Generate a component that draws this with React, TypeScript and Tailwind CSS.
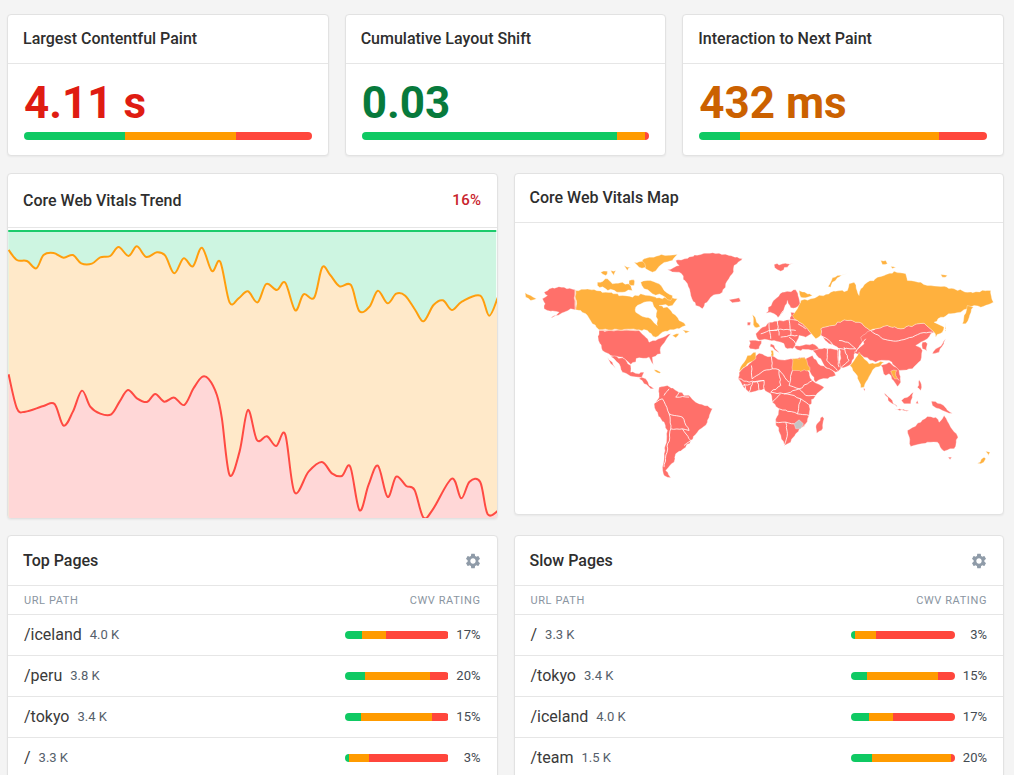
import { MdSettings } from "react-icons/md";

type Split = [number, number, number];

const metrics: { title: string; value: string; color: string; split: Split }[] = [
  { title: "Largest Contentful Paint", value: "4.11 s", color: "text-[#df1c12]", split: [35, 38.6, 26.4] },
  { title: "Cumulative Layout Shift", value: "0.03", color: "text-[#077a3c]", split: [88.6, 10, 1.4] },
  { title: "Interaction to Next Paint", value: "432 ms", color: "text-[#cb6100]", split: [14.2, 69.1, 16.7] },
];

const topPages: { path: string; count: string; pct: string; split: Split }[] = [
  { path: "/iceland", count: "4.0 K", pct: "17%", split: [17, 23, 60] },
  { path: "/peru", count: "3.8 K", pct: "20%", split: [20, 62, 18] },
  { path: "/tokyo", count: "3.4 K", pct: "15%", split: [15.5, 68.5, 16] },
  { path: "/", count: "3.3 K", pct: "3%", split: [4, 20, 76] },
];

const slowPages: { path: string; count: string; pct: string; split: Split }[] = [
  { path: "/", count: "3.3 K", pct: "3%", split: [4, 20, 76] },
  { path: "/tokyo", count: "3.4 K", pct: "15%", split: [15.5, 68.5, 16] },
  { path: "/iceland", count: "4.0 K", pct: "17%", split: [17, 23, 60] },
  { path: "/team", count: "1.5 K", pct: "20%", split: [20, 76, 4] },
];

// traced from the chart, 3x units
const goodLine = [
  [25, 75], [50, 105], [80, 108], [108, 130], [130, 90], [160, 84], [190, 98], [218, 90], [243, 115], [275, 116],
  [300, 97], [330, 93], [355, 66], [385, 93], [410, 64], [438, 96], [470, 82], [495, 92], [522, 145], [550, 100],
  [578, 124], [605, 68], [635, 138], [660, 110], [688, 232], [715, 220], [743, 199], [772, 232], [798, 177], [830, 195],
  [855, 173], [885, 256], [910, 208], [942, 218], [966, 127], [990, 150], [1018, 184], [1052, 180], [1077, 258], [1108, 245],
  [1133, 197], [1162, 235], [1188, 206], [1215, 212], [1245, 255], [1270, 289], [1300, 240], [1328, 226], [1355, 255], [1385, 230],
  [1440, 212], [1467, 272], [1493, 217],
];

const poorLine = [
  [25, 448], [50, 550], [75, 560], [130, 543], [163, 537], [190, 602], [218, 560], [245, 497], [270, 545], [300, 566],
  [333, 568], [358, 530], [383, 495], [410, 520], [440, 531], [465, 507], [492, 530], [522, 518], [552, 540], [580, 490],
  [605, 456], [625, 462], [650, 510], [665, 580], [688, 750], [718, 680], [743, 555], [770, 645], [800, 634], [828, 663],
  [855, 628], [883, 802], [925, 740], [965, 711], [995, 745], [1025, 753], [1050, 725], [1078, 856], [1105, 780], [1133, 722],
  [1162, 816], [1188, 755], [1218, 783], [1243, 795], [1270, 878], [1300, 850], [1355, 761], [1383, 820], [1408, 770], [1440, 771],
  [1462, 867], [1493, 858],
];

function smooth(pts: number[][]) {
  let d = `M${pts[0][0]} ${pts[0][1]}`;
  for (let i = 0; i < pts.length - 1; i++) {
    const a = pts[Math.max(i - 1, 0)];
    const b = pts[i];
    const c = pts[i + 1];
    const e = pts[Math.min(i + 2, pts.length - 1)];
    const c1 = [b[0] + (c[0] - a[0]) / 6, b[1] + (c[1] - a[1]) / 6];
    const c2 = [c[0] - (e[0] - b[0]) / 6, c[1] - (e[1] - b[1]) / 6];
    d += `C${c1[0]} ${c1[1]} ${c2[0]} ${c2[1]} ${c[0]} ${c[1]}`;
  }
  return d;
}

// breaks long straight edges so coasts and borders look hand-drawn, same result every run
function rough(points: string, closed: boolean, amp: number) {
  const pts = points.split(" ").map((p) => p.split(",").map(Number));
  const out: string[] = [];
  const count = closed ? pts.length : pts.length - 1;
  for (let i = 0; i < count; i++) {
    const a = pts[i];
    const b = pts[(i + 1) % pts.length];
    const steps = Math.max(1, Math.round(Math.hypot(b[0] - a[0], b[1] - a[1]) / 9));
    for (let s = 0; s < steps; s++) {
      const t = s / steps;
      const x = a[0] + (b[0] - a[0]) * t;
      const y = a[1] + (b[1] - a[1]) * t;
      const n = Math.sin(x * 12.9898 + y * 78.233) * 43758.5453;
      const m = Math.sin(x * 39.346 + y * 11.135) * 24634.6345;
      const jx = s === 0 ? 0 : ((n - Math.floor(n)) - 0.5) * amp;
      const jy = s === 0 ? 0 : ((m - Math.floor(m)) - 0.5) * amp;
      out.push(`${(x + jx).toFixed(1)},${(y + jy).toFixed(1)}`);
    }
  }
  if (!closed) out.push(pts[pts.length - 1].join(","));
  return out.join(" ");
}

const RED = "#ff706a";
const ORANGE = "#ffb13e";

const westRed = [
  "178,148 178,208 165,205 145,215 120,225 105,232 130,215 105,212 85,205 88,190 80,175 95,165 85,155 110,142 145,140",
  "250,270 370,270 385,285 400,305 420,300 465,280 450,300 435,320 435,340 410,350 415,378 400,350 370,352 345,372 320,350 285,345 260,330 248,300",
  "285,348 320,352 345,375 345,395 370,400 385,395 378,412 350,408 320,395 310,370 295,355",
  "275,350 290,365 300,385 285,370",
  "378,410 390,415 400,435 415,445 405,445 385,430 370,415",
  "430,440 455,435 490,455 525,470 540,485 590,505 575,545 545,575 525,600 510,620 480,640 475,665 450,690 465,712 445,705 440,680 445,640 455,570 420,510 415,490 430,470",
  "480,60 555,42 610,38 640,45 680,55 655,75 650,100 630,130 620,155 585,170 560,205 540,195 525,165 515,130 490,95 455,88 490,75",
  "640,178 670,172 675,182 650,187",
  "695,245 705,245 703,254 695,254",
];

const westOrange = [
  "28,157 45,165 62,175 45,180 30,170",
  "180,150 235,147 270,155 320,165 350,170 375,160 400,165 440,175 465,170 485,175 470,195 430,195 460,205 490,240 510,255 490,265 440,275 420,290 395,270 370,268 250,268 230,250 215,225 195,210 180,208",
  "245,125 275,115 290,130 320,125 345,135 350,150 310,155 270,145 245,135",
  "385,55 430,45 485,42 470,60 440,70 410,95 390,85 380,70",
  "355,65 380,62 390,80 370,80",
  "255,95 275,92 270,105",
  "285,90 300,90 295,105",
  "325,75 345,80 335,90",
  "340,120 355,118 355,135 340,132",
  "375,125 395,120 430,130 445,150 470,165 465,180 440,165 410,160 385,145",
  "500,268 522,272 510,278",
  "470,285 490,280 480,292",
  "415,388 435,395 432,398 418,392",
];

const westBorders = [
  "445,465 460,445",
  "415,488 440,475 460,520",
  "460,520 500,530 520,570 500,565 465,565",
  "460,520 465,565 445,680",
  "490,455 480,470 520,470",
  "500,565 525,600 505,615",
];

const eastRed = [
  "70,72 95,70 128,68 110,80 90,92 72,82",
  "45,218 65,185 95,155 135,148 142,165 148,190 135,202 120,202 110,180 100,205 82,232 70,220 58,215",
  "120,215 138,220 145,240 118,238",
  "15,280 35,260 55,245 80,242 115,238 140,240 165,260 182,280 165,290 145,285 135,310 125,325 110,325 90,305 70,300 35,298 20,295",
  "-5,300 32,300 25,325 -2,325",
  "60,310 82,332 88,342 78,332 58,318",
  "130,318 185,310 205,325 185,330 140,328",
  "-38,415 -30,390 -5,370 5,355 25,338 60,348 65,345 90,358 120,355 162,350 165,380 185,420 220,440 195,465 175,495 175,525 165,550 135,580 120,605 100,615 90,585 75,545 85,505 65,485 60,460 40,445 -5,455 -25,435",
  "215,528 220,535 212,570 198,578 196,555",
  "185,330 205,325 230,325 265,325 265,360 270,385 255,395 220,375 210,355",
  "165,355 185,345 210,375 245,390 255,405 195,425 170,380",
  "210,265 245,255 280,238 325,245 358,270 345,295 325,320 315,335 302,370 270,382 265,325 235,310 210,285",
  "330,290 360,270 375,265 410,255 450,265 500,250 520,248 550,275 530,295 510,305 495,315 515,330 510,360 485,385 445,390 415,360 375,365 340,350 310,335 340,310",
  "390,375 415,365 445,390 450,425 440,438 428,420 415,400 405,405",
  "515,305 530,310 528,332 515,325",
  "585,295 565,335 545,340 555,325 575,310",
  "400,458 425,480 440,500 425,490",
  "430,505 475,510 440,507",
  "452,480 470,470 488,455 480,490 460,490",
  "542,482 570,490 605,518 575,510 545,495",
  "495,488 500,480 503,490",
  "505,418 512,432 510,450 500,440",
  "470,570 510,545 530,528 555,530 565,545 580,525 600,560 622,590 610,625 580,632 560,605 530,605 480,618",
  "592,650 603,650 598,657",
  "338,445 343,445 342,452",
];

const eastOrange = [
  "390,60 405,60 410,70 395,72",
  "570,102 590,105 575,110",
  "420,78 435,80 425,84",
  "232,138 245,112 290,97 260,112 245,125 240,140",
  "140,205 150,180 180,175 200,168 240,155 290,150 295,130 310,125 325,165 330,145 350,125 400,105 430,92 465,100 470,120 510,125 530,135 570,138 610,145 650,155 720,150 728,185 690,200 670,195 650,205 630,215 600,220 570,230 550,245 580,260 575,275 555,290 550,275 520,248 500,250 450,265 410,255 375,265 358,270 325,245 280,238 245,255 210,265 210,285 195,295 182,280 165,260 140,240 125,225",
  "145,150 185,165 165,172 150,170",
  "650,195 668,200 645,250 635,250 640,225",
  "582,245 586,270 583,272",
  "5,222 15,235 28,258 12,260 8,240",
  "125,355 162,352 178,390 125,390",
  "60,330 67,330 68,348 60,345",
  "-35,392 -20,365 -10,345 15,335 15,355 -10,370 -30,390",
  "325,335 340,355 355,370 400,365 390,375 375,380 365,390 340,440 330,442 315,400 298,375 310,360",
  "420,392 438,390 435,405 445,420 432,415 425,405",
  "705,632 718,635 712,645",
  "680,668 700,650 705,655 690,670",
];

// europe + middle east lines, in crop units around 740,280
const euroBorders = [
  "85,125 90,175",
  "110,122 115,165",
  "145,118 150,165",
  "90,150 120,146 165,150",
  "60,160 85,150 110,150",
  "120,170 145,165 170,165",
  "165,190 145,170",
  "172,130 195,145",
  "112,112 128,90",
  "215,210 225,235 250,255",
  "260,205 258,240 290,270",
  "240,165 265,180 290,205 345,205",
  "290,205 295,260",
  "310,200 325,240 300,262",
  "295,180 320,185 345,205",
  "345,215 355,200 375,175",
];

// africa lines, in crop units around 730,350
const africaBorders = [
  "62,45 64,85 100,60 125,55",
  "55,125 65,95 100,90 100,115",
  "122,18 125,55 145,58 175,95",
  "145,58 150,105 120,125",
  "185,60 175,105 205,115 230,100 245,90",
  "120,125 160,130 205,115",
  "150,130 125,155",
  "145,175 200,190 210,145 190,135 160,130",
  "205,115 225,135 255,135",
  "210,145 240,165",
  "135,215 165,215 170,250 160,285",
  "165,215 190,220",
  "210,235 225,220",
  "200,190 235,195",
  "22,85 55,95 100,90",
  "35,105 60,100",
  "40,100 45,120",
  "80,95 85,120",
];

function Land({ list, fill }: { list: string[]; fill: string }) {
  return (
    <>
      {list.map((p) => (
        <polygon key={p} points={rough(p, true, 6)} fill={fill} />
      ))}
    </>
  );
}

function Lines({ list }: { list: string[] }) {
  return (
    <>
      {list.map((p) => (
        <polyline key={p} points={rough(p, false, 4)} fill="none" strokeWidth="2.5" />
      ))}
    </>
  );
}

function WorldMap() {
  return (
    <svg viewBox="0 0 488 291" className="block w-full h-[291px]">
      <g transform="translate(0.5 17.5) scale(0.3333)" stroke="#fff" strokeWidth="1" strokeLinejoin="round">
        <Land list={westRed} fill={RED} />
        <Land list={westOrange} fill={ORANGE} />
        <Lines list={westBorders} />
        <polyline points="178,148 178,208" fill="none" stroke="#ffc9b0" strokeWidth="3" />
        <polyline points="250,269 370,269" fill="none" stroke="#ffc9b0" strokeWidth="3" />
        {/* hudson bay */}
        <polygon points={rough("360,200 385,185 410,185 420,205 425,255 405,235 375,225 360,215", true, 6)} fill="#fff" />
      </g>
      <g transform="translate(235.5 17.5) scale(0.3333)" stroke="#fff" strokeWidth="1" strokeLinejoin="round">
        <Land list={eastRed} fill={RED} />
        <Land list={eastOrange} fill={ORANGE} />
        <polyline points={rough("360,270 395,295 435,302 485,290 510,278 545,275", false, 4)} fill="none" strokeWidth="2.5" />
        <g transform="translate(-30 120)">
          <Lines list={euroBorders} />
        </g>
        <g transform="translate(-60 330)">
          <Lines list={africaBorders} />
        </g>
        <polygon points="130,550 145,538 158,550 150,565 135,565" fill="#c4c4c4" />
      </g>
    </svg>
  );
}

function TrendChart() {
  return (
    <svg viewBox="0 0 488 288" className="block w-full h-[288px]">
      <rect width="488" height="288" fill="#cdf5e1" />
      <g transform="translate(-8 -5) scale(0.3333)">
        <path d={`${smooth(goodLine)}L1493 890L25 890Z`} fill="#ffe9c9" />
        <path d={`${smooth(poorLine)}L1493 890L25 890Z`} fill="#ffd7d7" />
        <path d={smooth(goodLine)} fill="none" stroke="#ff9e0d" strokeWidth="6" />
        <path d={smooth(poorLine)} fill="none" stroke="#ff4a42" strokeWidth="6" />
      </g>
      <rect width="488" height="2" fill="#1ccb6c" />
    </svg>
  );
}

function Bar({ split, className }: { split: Split; className: string }) {
  return (
    <div className={`flex overflow-hidden rounded-full ${className}`}>
      <div className="bg-[#0fc963]" style={{ width: `${split[0]}%` }} />
      <div className="bg-[#ff9b00]" style={{ width: `${split[1]}%` }} />
      <div className="bg-[#ff463c]" style={{ width: `${split[2]}%` }} />
    </div>
  );
}

function Card({ className = "", children }: { className?: string; children: React.ReactNode }) {
  return (
    <div className={`bg-white border border-[#e2e2e2] rounded-[4px] shadow-[0_1px_2px_rgba(0,0,0,0.05)] overflow-hidden ${className}`}>
      {children}
    </div>
  );
}

function PagesTable({ title, rows }: { title: string; rows: typeof topPages }) {
  return (
    <Card>
      <div className="h-[50px] px-[15px] pt-[1px] flex items-center justify-between border-b border-[#e6e6e6]">
        <h2 className="text-base font-medium text-[#2e2e2e]">{title}</h2>
        <MdSettings size={18} className="text-[#8f9ba8]" />
      </div>
      <div className="h-[29px] px-4 pt-1 flex items-center justify-between border-b border-[#e6e6e6] text-[11px] tracking-[0.6px] text-[#8a95a1]">
        <span>URL PATH</span>
        <span>CWV RATING</span>
      </div>
      {rows.map((r) => (
        <div key={r.path} className="h-[41px] px-4 flex items-center border-b border-[#e6e6e6]">
          <span className="text-base text-[#3a3a3a]">{r.path}</span>
          <span className="ml-2 text-[13px] text-[#55606b]">{r.count}</span>
          <Bar split={r.split} className="ml-auto w-[104px] h-2" />
          <span className="w-8 text-right text-[13px] text-[#444b52]">{r.pct}</span>
        </div>
      ))}
      <div className="h-[41px]" />
    </Card>
  );
}

export default function App() {
  return (
    <div className="h-screen overflow-hidden bg-[#f4f4f4] pl-[7px] pr-[10px] pt-[13.5px] font-['Roboto',sans-serif]">
      <div className="grid grid-cols-3 gap-4">
        {metrics.map((m) => (
          <Card key={m.title}>
            <div className="h-[49px] px-[15px] flex items-center border-b border-[#e6e6e6]">
              <h2 className="text-base font-medium text-[#2e2e2e]">{m.title}</h2>
            </div>
            <div className="h-[91px] px-4 pt-[13px]">
              <div className={`text-[44px] leading-[52px] font-bold ${m.color}`}>{m.value}</div>
              <Bar split={m.split} className="mt-[3.5px] h-2" />
            </div>
          </Card>
        ))}
      </div>

      <div className="mt-[17px] grid grid-cols-2 gap-4 items-start">
        <Card>
          <div className="h-[54px] px-[15px] pt-[1px] flex items-center justify-between border-b border-[#e6e6e6]">
            <h2 className="text-base font-medium text-[#2e2e2e]">Core Web Vitals Trend</h2>
            <span className="text-[15px] font-medium tracking-[0.4px] text-[#c8232c]">16%</span>
          </div>
          <div className="pt-[2px]">
            <TrendChart />
          </div>
        </Card>
        <Card>
          <div className="h-[49px] px-[15px] flex items-center border-b border-[#e6e6e6]">
            <h2 className="text-base font-medium text-[#2e2e2e]">Core Web Vitals Map</h2>
          </div>
          <WorldMap />
        </Card>
      </div>

      <div className="mt-4 grid grid-cols-2 gap-4 items-start">
        <PagesTable title="Top Pages" rows={topPages} />
        <PagesTable title="Slow Pages" rows={slowPages} />
      </div>
    </div>
  );
}
